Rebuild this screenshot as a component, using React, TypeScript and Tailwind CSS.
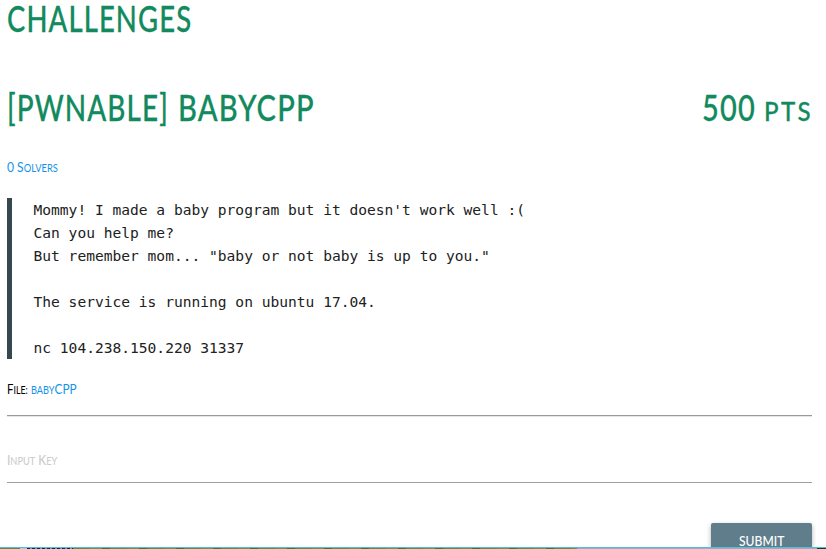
import { useLayoutEffect, useRef, useState, type ReactNode } from "react";

type FitProps = { width: number; className?: string; children: ReactNode };

// Condenses a line of text horizontally so that it fills the given width.
function Fit({ width, className = "", children }: FitProps) {
  const ref = useRef<HTMLSpanElement>(null);
  const [scale, setScale] = useState(1);
  useLayoutEffect(() => {
    if (ref.current) setScale(width / ref.current.offsetWidth);
  }, [width]);
  return (
    <span className="block" style={{ width }}>
      <span
        ref={ref}
        className={`block w-max origin-left whitespace-pre ${className}`}
        style={{ transform: `scaleX(${scale})` }}
      >
        {children}
      </span>
    </span>
  );
}

const heading = "text-[37px] leading-[44px] font-medium tracking-[0.04em] [-webkit-text-stroke:0.3px_#128a5e]";

const description = `Mommy! I made a baby program but it doesn't work well :(
Can you help me?
But remember mom... "baby or not baby is up to you."

The service is running on ubuntu 17.04.

nc 104.238.150.220 31337`;

export default function App() {
  return (
    <div className="flex h-[549px] w-full flex-col overflow-hidden bg-white font-['Lato',sans-serif] text-[#212121]">
      <main className="flex h-[547px] shrink-0 flex-col overflow-hidden pr-[14px] pl-[7px]">
        <h1 className="-mt-[4px] h-[44px] shrink-0 text-[#128a5e]">
          <Fit width={185} className={heading}>CHALLENGES</Fit>
        </h1>
        <div className="mt-[45px] flex h-[44px] shrink-0 justify-between text-[#128a5e]">
          <h2 className="flex gap-[9px]">
            <Fit width={162} className={heading}>[PWNABLE]</Fit>
            <Fit width={137} className={heading}>BABYCPP</Fit>
          </h2>
          <div className="-mr-px flex items-baseline gap-[8px]">
            <Fit width={54} className={heading}>500</Fit>
            <Fit width={49} className="text-[26px] leading-[44px] font-medium tracking-[0.1em] [-webkit-text-stroke:0.3px_#128a5e]">PTS</Fit>
          </div>
        </div>
        <a className="mt-[28px] h-[20px] shrink-0 text-[#1594e6]">
          <Fit width={51} className="text-[13.5px] leading-5">
            0 S<span className="text-[10.5px]">OLVERS</span>
          </Fit>
        </a>
        <pre className="mt-[21px] h-[161px] shrink-0 border-l-[5px] border-[#37474f] pl-[21.5px] font-['DejaVu_Sans_Mono',monospace] text-[14.58px] leading-[23px]">
          {description}
        </pre>
        <div className="mt-[20px] flex h-[20px] shrink-0 gap-[3px]">
          <Fit width={21} className="text-[13.5px] leading-5 text-black">
            F<span className="text-[10.5px]">ILE:</span>
          </Fit>
          <Fit width={45.5} className="text-[13.5px] leading-5 text-[#1594e6]">
            <span className="text-[10.5px]">BABY</span>CPP
          </Fit>
        </div>
        <hr className="mt-[16px] h-[2px] shrink-0 border-t border-b border-t-[#9a9a9a] border-b-[#e6e6e6]" />
        <div className="mt-[33px] h-[33px] shrink-0 border-b border-[#9e9e9e] text-[#cccccc]">
          <Fit width={50} className="text-[13.5px] leading-5 font-medium">
            I<span className="text-[10.5px]">NPUT</span> K<span className="text-[10.5px]">EY</span>
          </Fit>
        </div>
        <button className="mt-[40px] flex h-[36px] w-[101px] shrink-0 justify-center self-end rounded-[2px] bg-[#607d8b] pt-[8px] text-white shadow-[0_2px_5px_rgba(0,0,0,0.3)]">
          <Fit width={45} className="text-[14px] leading-5 font-medium">SUBMIT</Fit>
        </button>
      </main>
      <footer className="h-[2px] shrink-0">
        <div className="h-px bg-[#55bdd6]" />
        <div className="flex h-px">
          <div className="w-[20px] bg-[#71833b]" />
          <div className="w-[7px] bg-[#b9c5dc]" />
          <div className="w-[46px] bg-[repeating-linear-gradient(90deg,#17263f_0_3px,#8291b0_3px_5px)]" />
          <div className="w-[504px] bg-[repeating-linear-gradient(90deg,#71853a_0_17px,#8a8742_17px_29px,#506c32_29px_37px)]" />
          <div className="flex-1 bg-[#a3a7c3]" />
          <div className="w-[9px] bg-[#153d22]" />
        </div>
      </footer>
    </div>
  );
}
